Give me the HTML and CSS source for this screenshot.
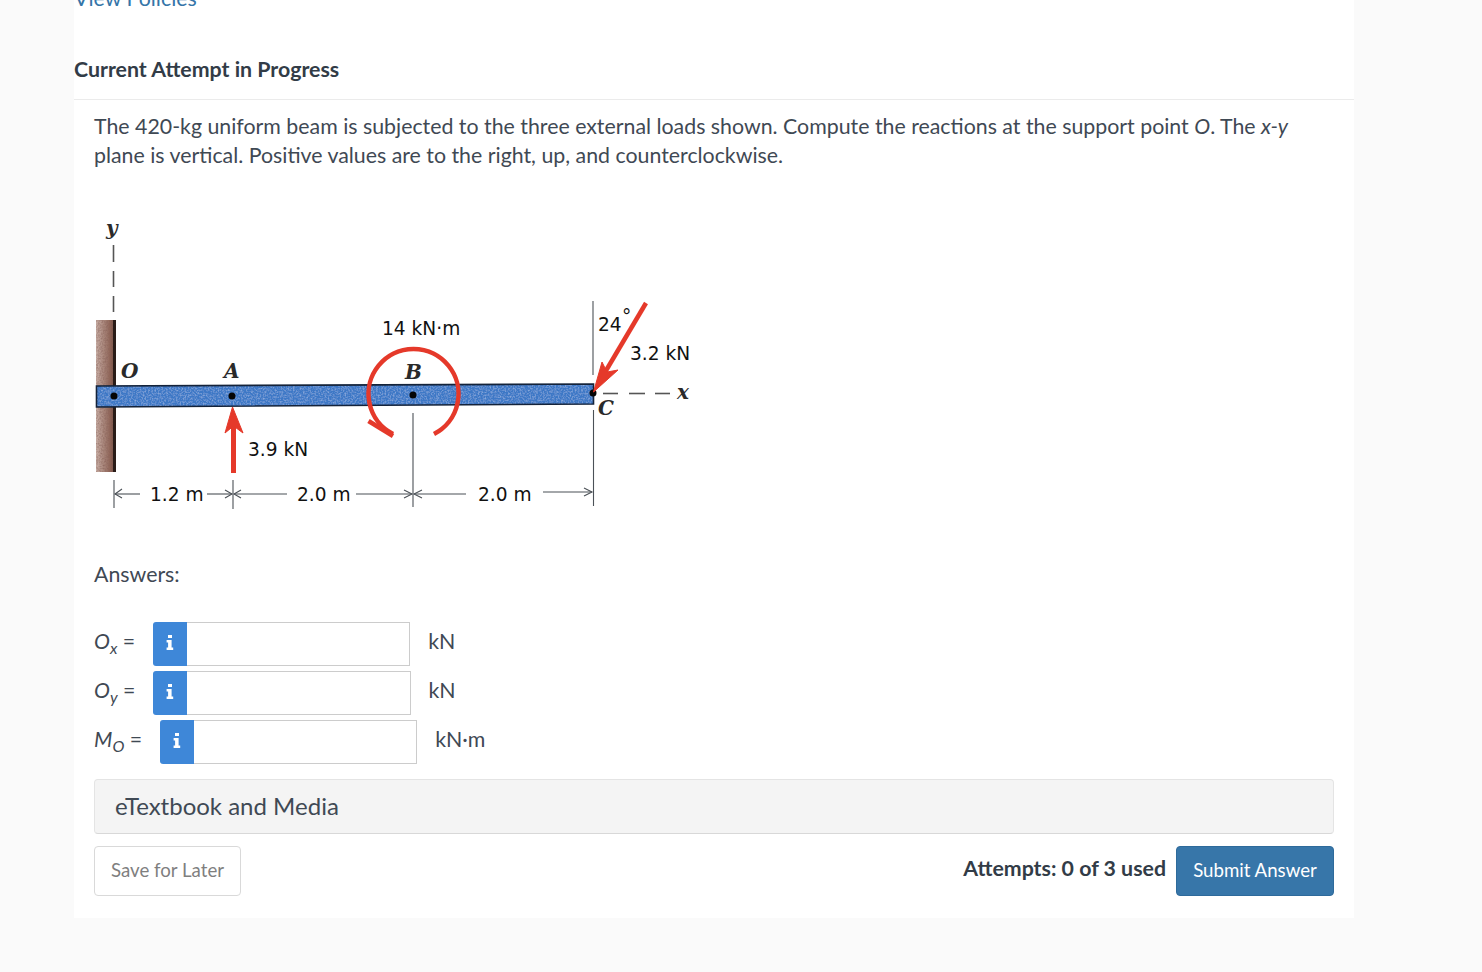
FILE: index.html
```html
<!DOCTYPE html>
<html lang="en">
<head>
<meta charset="utf-8">
<title>Current Attempt in Progress</title>
<link rel="stylesheet" href="styles.css">
</head>
<body>
<main class="card">
  <a class="policies" href="#">View Policies</a>
  <h2 class="attempt-title">Current Attempt in Progress</h2>
  <section class="question">
    <p class="prompt">The 420-kg uniform beam is subjected to the three external loads shown. Compute the reactions at the support point <i>O</i>. The <i>x-y</i> plane is vertical. Positive values are to the right, up, and counterclockwise.</p>
    <svg class="diagram" viewBox="94 210 610 304" width="610" height="304" role="img" aria-label="Beam diagram">
      <defs>
        <filter id="grain-blue" x="0" y="0" width="100%" height="100%">
          <feTurbulence type="fractalNoise" baseFrequency="0.6" numOctaves="2" seed="4"/>
          <feColorMatrix values="0 0 0 0 0.55  0 0 0 0 0.72  0 0 0 0 0.95  0 0 0 0.9 -0.38"/>
          <feComposite in2="SourceGraphic" operator="in"/>
          <feMerge><feMergeNode in="SourceGraphic"/><feMergeNode/></feMerge>
        </filter>
        <filter id="grain-brown" x="0" y="0" width="100%" height="100%">
          <feTurbulence type="fractalNoise" baseFrequency="0.6" numOctaves="2" seed="9"/>
          <feColorMatrix values="0 0 0 0 0.25  0 0 0 0 0.12  0 0 0 0 0.1  0 0 0 1.4 -0.5"/>
          <feComposite in2="SourceGraphic" operator="in"/>
          <feMerge><feMergeNode in="SourceGraphic"/><feMergeNode/></feMerge>
        </filter>
        <linearGradient id="wall" x1="0" x2="1" y1="0" y2="0">
          <stop offset="0" stop-color="#c9afa6"/>
          <stop offset="0.75" stop-color="#8f6558"/>
          <stop offset="1" stop-color="#6e4a40"/>
        </linearGradient>
      </defs>

      <g class="dash-v">
        <line x1="113.5" y1="245" x2="113.5" y2="262"/>
        <line x1="113.5" y1="271" x2="113.5" y2="287"/>
        <line x1="113.5" y1="296" x2="113.5" y2="312"/>
      </g>
      <rect x="96" y="320" width="19" height="152" fill="url(#wall)" filter="url(#grain-brown)"/>
      <line x1="114.5" y1="320" x2="114.5" y2="472" class="wall-edge"/>

      <polygon class="beam" points="96.5,386 593.5,384 593.5,404 96.5,407" filter="url(#grain-blue)"/>
      <polygon class="beam-line" points="96.5,386 593.5,384 593.5,404 96.5,407"/>
      <circle class="dot" cx="114" cy="396" r="3.5"/>
      <circle class="dot" cx="232" cy="396" r="3.5"/>
      <circle class="dot" cx="413" cy="395" r="3.5"/>
      <circle class="dot" cx="593" cy="393" r="3.5"/>

      <g class="thin">
        <line x1="114" y1="480" x2="114" y2="508"/>
        <line x1="233" y1="480" x2="233" y2="509"/>
        <line x1="413" y1="413" x2="413" y2="507"/>
        <line x1="593" y1="301" x2="593" y2="375"/>
        <line x1="593.5" y1="410" x2="593.5" y2="506"/>
        <line x1="115" y1="494" x2="140" y2="494"/>
        <path d="M122 489 L115 494 L122 498"/>
        <line x1="207" y1="494" x2="232" y2="494"/>
        <path d="M225 490 L232 494 L225 498"/>
        <line x1="234" y1="494" x2="287" y2="494"/>
        <path d="M241 490 L234 494 L241 498"/>
        <line x1="356" y1="494" x2="412" y2="494"/>
        <path d="M404 490 L412 494 L404 498"/>
        <line x1="414" y1="494" x2="466" y2="494"/>
        <path d="M422 490 L414 494 L422 498"/>
        <line x1="543" y1="492" x2="592" y2="492"/>
        <path d="M584 488 L592 492 L584 496"/>
      </g>
      <g class="dash-x">
        <line x1="603" y1="393.5" x2="618" y2="393.5"/>
        <line x1="629" y1="393.5" x2="645" y2="393.5"/>
        <line x1="655" y1="393.5" x2="670" y2="393.5"/>
      </g>

      <g class="red">
        <line class="shaft" x1="233.5" y1="473" x2="233.5" y2="420"/>
        <path class="red-fill" d="M232.5 407 L243 433 L233.5 426 L225 433 Z"/>
        <path d="M434 434 A45 45 0 1 0 393 434"/>
        <path d="M368.5 421 L393 436"/>
        <line x1="646" y1="303" x2="604" y2="374"/>
        <path class="red-fill" d="M593.5 392 L602 362 L607 372 L618 370 Z"/>
      </g>

      <text class="lbl" x="382" y="335">14 kN·m</text>
      <text class="lbl" x="248" y="456">3.9 kN</text>
      <text class="lbl" x="150" y="501">1.2 m</text>
      <text class="lbl" x="297" y="501">2.0 m</text>
      <text class="lbl" x="478" y="501">2.0 m</text>
      <text class="lbl" x="598" y="331">24</text>
      <text class="lbl" x="622" y="323">°</text>
      <text class="lbl" x="630" y="360">3.2 kN</text>

      <text class="sym" x="106" y="235">y</text>
      <text class="sym" x="121" y="378">O</text>
      <text class="sym" x="224" y="378">A</text>
      <text class="sym" x="405" y="379">B</text>
      <text class="sym" x="598" y="415">C</text>
      <text class="sym" x="677" y="399">x</text>
    </svg>

    <p class="answers-label">Answers:</p>
    <div class="answers">
      <div class="answer">
        <label class="var"><i>O<sub>x</sub></i> =</label>
        <span class="info"><svg viewBox="0 0 8 15" width="8" height="15"><path d="M2 0h4v3H2zM.6 5H5.6v7.4H7.2V15H.6v-2.6h1.5V7.6H.6z"/></svg></span>
        <input class="field" type="text" aria-label="O x">
        <span class="unit">kN</span>
      </div>
      <div class="answer">
        <label class="var"><i>O<sub>y</sub></i> =</label>
        <span class="info"><svg viewBox="0 0 8 15" width="8" height="15"><path d="M2 0h4v3H2zM.6 5H5.6v7.4H7.2V15H.6v-2.6h1.5V7.6H.6z"/></svg></span>
        <input class="field" type="text" aria-label="O y">
        <span class="unit">kN</span>
      </div>
      <div class="answer">
        <label class="var"><i>M<sub>O</sub></i> =</label>
        <span class="info"><svg viewBox="0 0 8 15" width="8" height="15"><path d="M2 0h4v3H2zM.6 5H5.6v7.4H7.2V15H.6v-2.6h1.5V7.6H.6z"/></svg></span>
        <input class="field" type="text" aria-label="M O">
        <span class="unit">kN·m</span>
      </div>
    </div>

    <div class="media">eTextbook and Media</div>
    <div class="actions">
      <button class="btn btn-save" type="button">Save for Later</button>
      <span class="attempts">Attempts: 0 of 3 used</span>
      <button class="btn btn-submit" type="button">Submit Answer</button>
    </div>
  </section>
</main>
</body>
</html>
```

FILE: styles.css
```css
* { box-sizing: border-box; }
html, body { margin: 0; height: 972px; overflow: hidden; background: #fafafa; }
body { font-family: Lato, "Liberation Sans", sans-serif; color: #39424e; }

.card {
  width: 1280px;
  height: 918px;
  margin-left: 74px;
  background: #fff;
  overflow: hidden;
}
.policies {
  display: block;
  margin: -12px 0 0 0;
  height: 20px;
  font-size: 21.33px;
  line-height: 20px;
  color: #3575a8;
  text-decoration: none;
}
.attempt-title {
  margin: 0;
  padding: 47px 0 0;
  height: 92px;
  font-size: 21.33px;
  line-height: 29px;
  font-weight: 700;
  color: #323c47;
  border-bottom: 1px solid #ebebeb;
}
.question { padding: 12px 20px 0; }
.prompt {
  margin: 0;
  font-size: 21.33px;
  line-height: 29px;
  color: #3f4954;
}
.diagram { display: block; margin-top: 40px; }
.answers-label {
  margin: 46px 0 0;
  font-size: 21.33px;
  line-height: 29px;
  color: #3f4954;
}
.answers { margin-top: 33px; display: flex; flex-direction: column; gap: 5px; }
.answer { display: flex; align-items: center; height: 44px; }
.answer:nth-child(2) .field { width: 224px; }
.answer:nth-child(2) .unit { margin-left: 17px; }
.var { font-size: 21.33px; margin: 0 18px 6px 0; color: #3f4954; line-height: 29px; }
.var sub { font-size: 16px; line-height: 0; }
.info {
  display: flex;
  align-items: center;
  justify-content: center;
  width: 34px;
  height: 44px;
  padding: 0 1px 4px 0;
  background: #3e87d8;
  border-radius: 3px 0 0 3px;
}
.info svg { fill: #fff; display: block; width: 8px; height: 15px; }
.field {
  width: 223px;
  height: 44px;
  border: 1px solid #ccc;
  border-left: 0;
  background: #fff;
  padding: 0 8px;
}
.unit { margin: 0 0 6px 18px; font-size: 21.33px; line-height: 29px; color: #3f4954; }
.media {
  margin-top: 15px;
  height: 55px;
  padding-left: 20px;
  font-size: 24px;
  line-height: 51px;
  color: #3f4954;
  background: #f4f4f4;
  border: 1px solid #e4e4e4;
  border-bottom-color: #d8d8d8;
  border-radius: 4px;
}
.actions { display: flex; align-items: center; margin-top: 12px; }
.btn {
  height: 50px;
  padding: 0 16px 2px;
  font-family: inherit;
  font-size: 18.67px;
  border-radius: 4px;
}
.btn-save { background: #fff; color: #7f7f7f; border: 1px solid #d9d9d9; }
.btn-submit { width: 158px; background: #3776a9; color: #fff; border: 1px solid #2e6a9b; }
.attempts { margin-left: auto; margin-right: 10px; margin-top: -6px; font-size: 21.33px; font-weight: 700; color: #323c47; }

/* diagram */
.dash-v line, .dash-x line { stroke: #555; stroke-width: 1.6; }
.wall-edge { stroke: #2a1c18; stroke-width: 3; }
.beam { fill: #3e78c6; }
.beam-line { fill: none; stroke: #14233a; stroke-width: 1.6; }
.dot { fill: #050505; }
.thin line, .thin path { fill: none; stroke: #4b5157; stroke-width: 1.1; }
.red line, .red path { fill: none; stroke: #e5392a; stroke-width: 4.5; }
.red .shaft { stroke-width: 5; }
.red .red-fill { fill: #e5392a; stroke-width: 1; }
.lbl { font-family: "DejaVu Sans", sans-serif; font-size: 18.6px; fill: #111; }
.sym { font-family: "DejaVu Serif", serif; font-size: 20px; font-style: italic; font-weight: 700; fill: #2a2a2a; }
```
